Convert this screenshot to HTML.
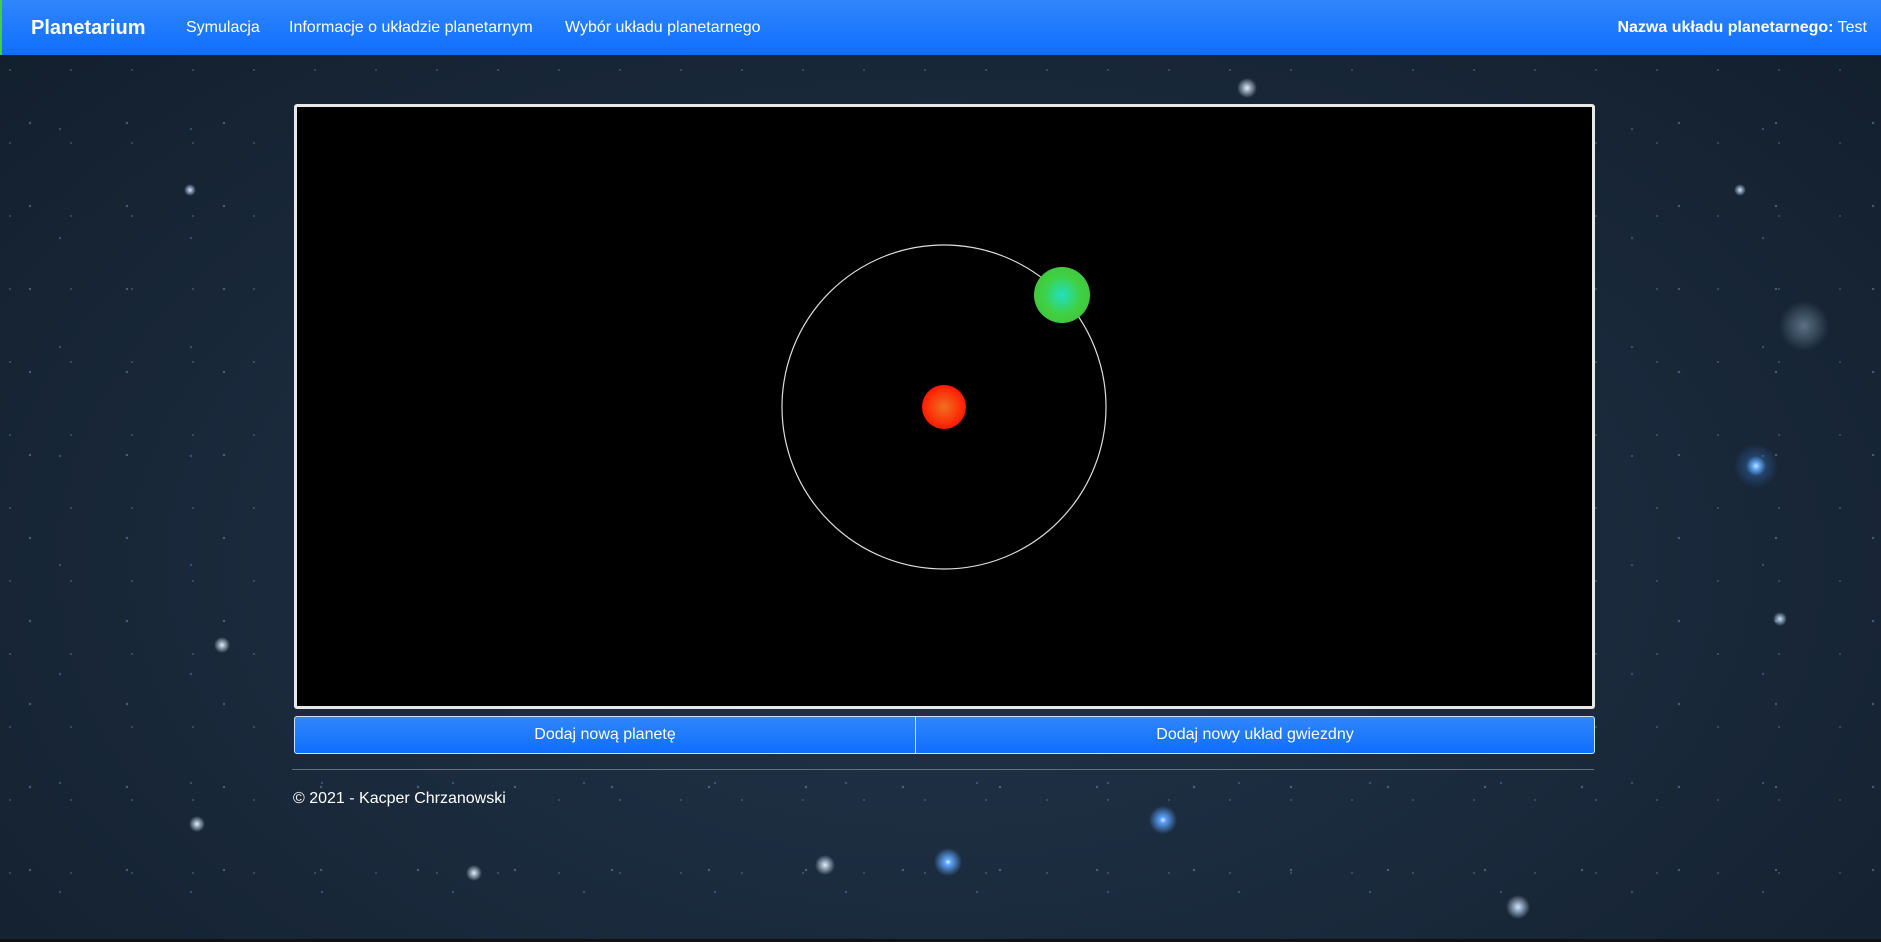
<!DOCTYPE html>
<html><head><meta charset="utf-8"><style>
*{margin:0;padding:0;box-sizing:border-box}
body{width:1881px;height:942px;overflow:hidden;font-family:"Liberation Sans",sans-serif;position:relative;
background:
radial-gradient(circle at 1756px 466px,#cfe6ff 0,#6ab0ff 3px,rgba(60,130,220,.3) 10px,transparent 22px),
radial-gradient(circle at 1804px 326px,rgba(160,190,210,.5) 0,transparent 25px),
radial-gradient(circle at 1163px 820px,#dfefff 0,#5aa0ff 3px,transparent 14px),
radial-gradient(circle at 948px 862px,#e0f0ff 0,#60a8ff 3px,transparent 14px),
radial-gradient(circle at 825px 865px,#e0f0ff 0,transparent 10px),
radial-gradient(circle at 1518px 907px,#cfe6ff 0,transparent 12px),
radial-gradient(circle at 1247px 88px,#e0f0ff 0,transparent 10px),
radial-gradient(circle at 222px 645px,#e0f0ff 0,transparent 8px),
radial-gradient(circle at 197px 824px,#e0f0ff 0,transparent 8px),
radial-gradient(circle at 474px 873px,#e0f0ff 0,transparent 8px),
radial-gradient(circle at 1780px 619px,#cfe6ff 0,transparent 7px),
radial-gradient(circle at 190px 190px,#cfe6ff 0,transparent 6px),
radial-gradient(circle at 1740px 190px,#cfe6ff 0,transparent 6px),
radial-gradient(circle at 30px 40px,rgba(150,190,230,.7) 0,transparent 1.5px) 0 0/97px 83px,
radial-gradient(circle at 60px 20px,rgba(120,170,240,.6) 0,transparent 1.5px) 0 0/131px 109px,
radial-gradient(circle at 10px 70px,rgba(200,220,240,.5) 0,transparent 1.2px) 0 0/61px 73px,
radial-gradient(ellipse at 50% 60%,#22344a 0,#1a2a3c 50%,#121e2c 100%);}
.nav{position:absolute;left:0;top:0;width:1881px;height:55px;background:linear-gradient(#3086fb,#0f6efd);border-left:2px solid #4c4;color:#fff;font-size:16px}
.nav span{position:absolute;top:19px}
.box{position:absolute;left:294px;top:104px;width:1301px;height:605px;background:#000;border:3px solid #e8e8e8;border-radius:3px}
.btn{position:absolute;top:716px;height:38px;background:linear-gradient(#3086fb,#0f6efd);border:1px solid #cfe0ff;color:#fff;font-size:16px;text-align:center;line-height:36px}
.hr{position:absolute;left:292px;top:769px;width:1302px;height:1px;background:#66707c}
.foot{position:absolute;left:293px;top:790px;color:#fff;font-size:16px}
.bot{position:absolute;left:0;top:939px;width:1881px;height:3px;background:#111}
</style></head><body>
<div class="nav">
<span style="left:29px;font-weight:bold;font-size:20px;top:17px">Planetarium</span>
<span style="left:184px">Symulacja</span>
<span style="left:287px">Informacje o układzie planetarnym</span>
<span style="left:563px">Wybór układu planetarnego</span>
<span style="right:14px"><b>Nazwa układu planetarnego:</b> Test</span>
</div>
<div class="box">
<svg width="1295" height="599" style="position:absolute;left:0;top:0">
<defs>
<radialGradient id="r"><stop offset="0" stop-color="#f07020"/><stop offset="1" stop-color="#ff1a00"/></radialGradient>
<radialGradient id="g"><stop offset="0" stop-color="#20e0c0"/><stop offset=".7" stop-color="#40d040"/><stop offset="1" stop-color="#40c840"/></radialGradient>
</defs>
<circle cx="647" cy="300" r="162" fill="none" stroke="#ddd" stroke-width="1.2"/>
<circle cx="647" cy="300" r="22" fill="url(#r)"/>
<circle cx="765" cy="188" r="28" fill="url(#g)"/>
</svg>
</div>
<div class="btn" style="left:294px;width:622px;border-radius:3px 0 0 3px">Dodaj nową planetę</div>
<div class="btn" style="left:915px;width:680px;border-radius:0 3px 3px 0">Dodaj nowy układ gwiezdny</div>
<div class="hr"></div>
<div class="foot">© 2021 - Kacper Chrzanowski</div>
<div class="bot"></div>
</body></html>
